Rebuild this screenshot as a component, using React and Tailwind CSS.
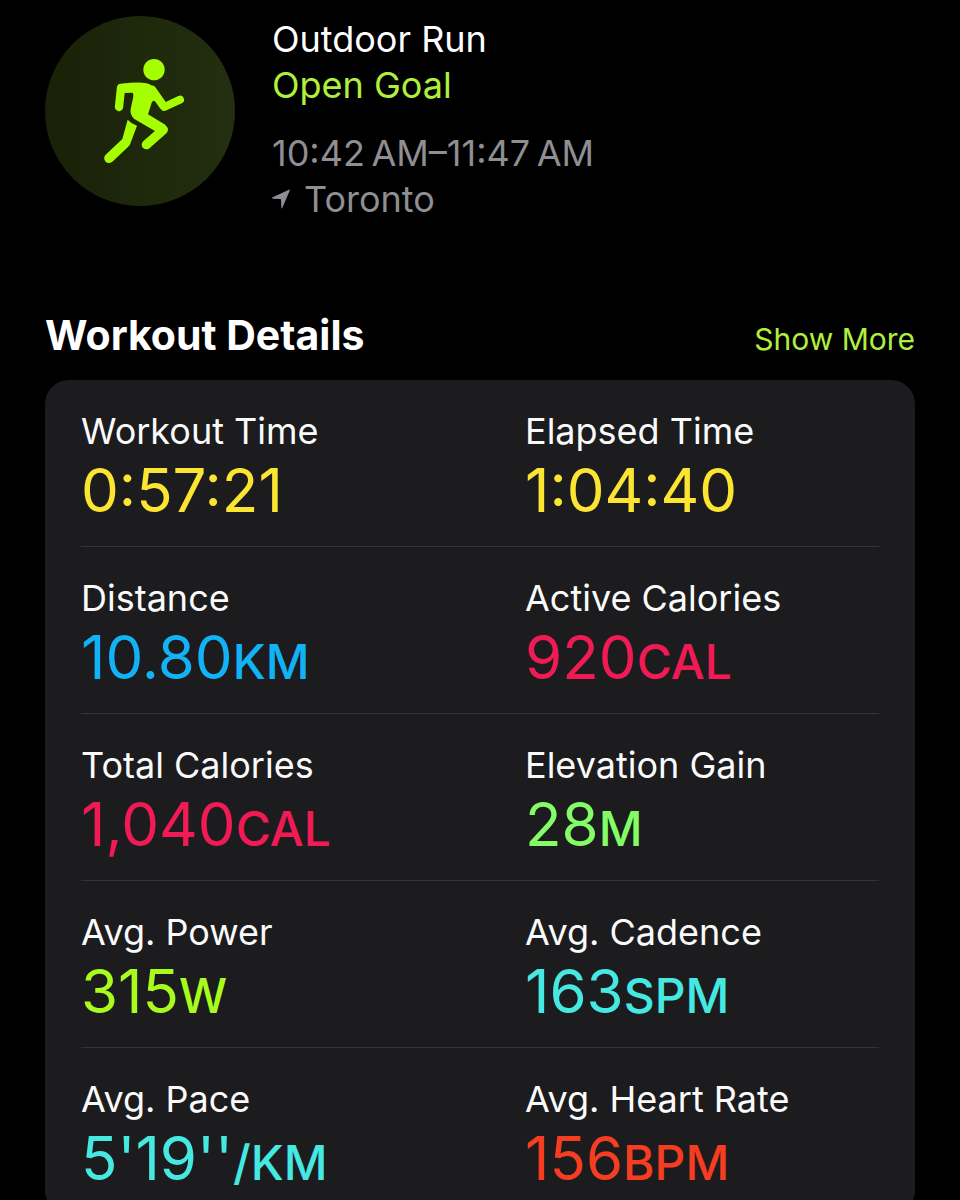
import React from 'react';

const metrics = [
  { label: 'Workout Time', value: '0:57:21', color: 'text-[#fbe532]' },
  { label: 'Elapsed Time', value: '1:04:40', color: 'text-[#fbe532]' },
  { label: 'Distance', value: '10.80', unit: 'KM', color: 'text-[#12b3f6]' },
  { label: 'Active Calories', value: '920', unit: 'CAL', color: 'text-[#f01a55]' },
  { label: 'Total Calories', value: '1,040', unit: 'CAL', color: 'text-[#f01a55]' },
  { label: 'Elevation Gain', value: '28', unit: 'M', color: 'text-[#83fc66]' },
  { label: 'Avg. Power', value: '315', unit: 'W', color: 'text-[#a8fb1c]' },
  { label: 'Avg. Cadence', value: '163', unit: 'SPM', color: 'text-[#46e8e2]' },
  { label: 'Avg. Pace', value: "5'19''", unit: '/KM', color: 'text-[#46e8e2]' },
  { label: 'Avg. Heart Rate', value: '156', unit: 'BPM', color: 'text-[#f63d21]' },
];

// Two metrics per row
const rows = [];
for (let i = 0; i < metrics.length; i += 2) {
  rows.push(metrics.slice(i, i + 2));
}

const RunnerIcon = () => (
  <svg viewBox="15 18 570 570" className="w-full h-full" fill="#a6ff00" aria-hidden="true">
    <circle cx="342" cy="179" r="32" />
    {/* torso */}
    <path d="M243 222 Q275 217 307 218 Q334 219 348 238 L371 274 L362 297 L346 275 Q339 268 335 278 L324 313 L378 346 L350 366 L283 327 Q269 314 272 297 L279 265 Q282 248 276 248 L247 249 Z" />
    {/* arms */}
    <path d="M237 291 L243 234 L256 233" fill="none" stroke="#a6ff00" strokeWidth="25" strokeLinecap="round" strokeLinejoin="round" />
    <path d="M337 239 L373 291 L420 269" fill="none" stroke="#a6ff00" strokeWidth="24" strokeLinecap="round" strokeLinejoin="round" />
    {/* legs */}
    <path d="M296 314 L370 359 L319 404" fill="none" stroke="#a6ff00" strokeWidth="28" strokeLinecap="round" strokeLinejoin="round" />
    <path d="M263 329 Q274 341 291 347 L272 398 Q270 405 264 411 L217 455 Q206 463 197 455 Q188 445 197 434 L247 387 Z" />
  </svg>
);

const LocationIcon = () => (
  <svg viewBox="0 0 54 58" className="w-[18px] h-5" fill="#8e8e93" aria-hidden="true">
    <path d="M51 1 Q54 0 53 4 L31 56 Q29 59 28 55 L27 31 Q27 29 25 29 L2 28 Q-1 26 2 24 Z" />
  </svg>
);

const Metric = ({ label, value, unit, color }) => (
  <div>
    <dt className="text-[36px] leading-[46px] text-[#fafafa]">{label}</dt>
    <dd className={`text-[60px] leading-[72px] whitespace-nowrap ${color}`}>
      {value}
      {unit && <span className="text-[48px] leading-none font-medium">{unit}</span>}
    </dd>
  </div>
);

const App = () => {
  return (
    <div className="max-h-screen overflow-hidden bg-black font-['Inter',sans-serif]">
      <main className="px-[45px] pt-4">
        <header className="flex gap-[37px]">
          <div className="w-[190px] h-[190px] shrink-0 rounded-full bg-linear-to-r from-[#192107] to-[#232f10]">
            <RunnerIcon />
          </div>
          <div className="text-[36px] leading-[46px] text-[#8e8e93]">
            <h1 className="text-white">Outdoor Run</h1>
            <p className="text-[#b0f03c]">Open Goal</p>
            <p className="mt-[22px]">10:42{'\u2009'}AM–11:47{'\u2009'}AM</p>
            <p className="flex items-center gap-3.5">
              <LocationIcon />
              Toronto
            </p>
          </div>
        </header>

        <section className="mt-[88px]">
          <div className="flex items-baseline justify-between">
            <h2 className="text-[41px] leading-[50px] font-bold text-white">Workout Details</h2>
            <button type="button" className="text-[30px] leading-[40px] text-[#b0f03c]">Show More</button>
          </div>
          <div className="mt-5 rounded-3xl bg-[#1c1c1e] px-9">
            {rows.map((row) => (
              <dl
                key={row[0].label}
                className="grid grid-cols-2 gap-x-[90px] pt-7 pb-5 border-b border-[#343436] last:border-b-0"
              >
                {row.map((metric) => (
                  <Metric key={metric.label} {...metric} />
                ))}
              </dl>
            ))}
          </div>
        </section>
      </main>
    </div>
  );
};

export default App;
